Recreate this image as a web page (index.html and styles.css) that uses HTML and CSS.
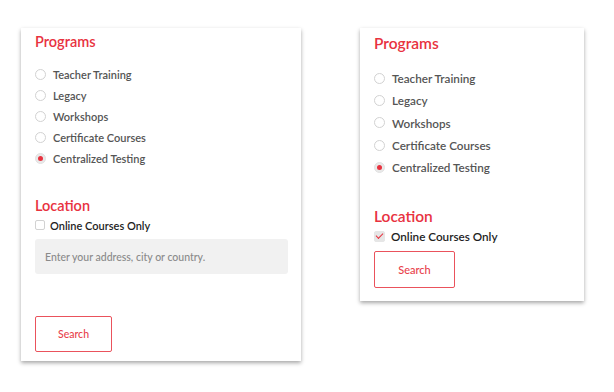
FILE: index.html
```html
<!DOCTYPE html>
<html lang="en">
<head>
    <meta charset="UTF-8">
    <meta name="viewport" content="width=device-width, initial-scale=1.0">
    <title>Program Filters</title>
    <link rel="stylesheet" href="styles.css">
</head>
<body>
    <div class="page">
        <!-- filter panel with address search -->
        <form class="filter-card wide">
            <h2>Programs</h2>
            <div class="radio-list">
                <label class="radio-row"><input type="radio" name="prog1"> Teacher Training</label>
                <label class="radio-row"><input type="radio" name="prog1"> Legacy</label>
                <label class="radio-row"><input type="radio" name="prog1"> Workshops</label>
                <label class="radio-row"><input type="radio" name="prog1"> Certificate Courses</label>
                <label class="radio-row"><input type="radio" name="prog1" checked> Centralized Testing</label>
            </div>
            <h2 class="location">Location</h2>
            <label class="check-row"><input type="checkbox"> Online Courses Only</label>
            <input class="address" type="text" placeholder="Enter your address, city or country.">
            <button type="button" class="search-btn">Search</button>
        </form>

        <!-- filter panel, online only -->
        <form class="filter-card narrow">
            <h2>Programs</h2>
            <div class="radio-list">
                <label class="radio-row"><input type="radio" name="prog2"> Teacher Training</label>
                <label class="radio-row"><input type="radio" name="prog2"> Legacy</label>
                <label class="radio-row"><input type="radio" name="prog2"> Workshops</label>
                <label class="radio-row"><input type="radio" name="prog2"> Certificate Courses</label>
                <label class="radio-row"><input type="radio" name="prog2" checked> Centralized Testing</label>
            </div>
            <h2 class="location">Location</h2>
            <label class="check-row"><input type="checkbox" checked> Online Courses Only</label>
            <button type="button" class="search-btn">Search</button>
        </form>
    </div>
</body>
</html>
```

FILE: styles.css
```css
body {
    margin: 0;
    background-color: #fff;
    font-family: 'Lato', 'Liberation Sans', sans-serif;
}

.page {
    display: flex;
    align-items: flex-start;
    gap: 59px;
    padding: 28px 0 24px 21px;
}

.filter-card {
    display: flex;
    flex-direction: column;
    align-items: flex-start;
    background-color: #fff;
    box-shadow: 0 2px 4px rgba(0, 0, 0, 0.35);
}

.filter-card h2 {
    margin: 0;
    font-weight: 600;
    color: #e8323f;
}

.radio-row,
.check-row {
    display: flex;
    align-items: center;
    font-weight: 600;
}

.radio-row {
    color: #555;
}

.check-row {
    color: #1e1e1e;
}

.radio-row input {
    appearance: none;
    margin: 0;
    border: 1px solid #d2d2d2;
    border-radius: 50%;
    background-color: #fff;
    display: grid;
    place-content: center;
}

.radio-row input:checked {
    background-color: #e9e9e9;
    border-color: #e2e2e2;
}

.radio-row input:checked::before {
    content: "";
    width: 5px;
    height: 5px;
    border-radius: 50%;
    background-color: #e8323f;
}

.check-row input {
    appearance: none;
    margin: 0;
    border: 1px solid #d2d2d2;
    border-radius: 2px;
    background-color: #fff;
    display: grid;
    place-content: center;
}

.check-row input:checked {
    background-color: #e6e6e6;
    border-color: #e6e6e6;
}

.check-row input:checked::before {
    content: "";
    width: 6px;
    height: 3px;
    margin-top: -2px;
    border-left: 1.2px solid #e8323f;
    border-bottom: 1.2px solid #e8323f;
    transform: rotate(-45deg);
}

.address {
    box-sizing: border-box;
    border: none;
    border-radius: 3px;
    background-color: #f1f1f1;
    font-family: inherit;
    font-weight: 500;
    color: #333;
    outline: none;
}

.address::placeholder {
    color: #8a8a8a;
}

.search-btn {
    box-sizing: border-box;
    background-color: #fff;
    border: 1.5px solid #ea525c;
    border-radius: 2px;
    color: #e8414b;
    font-family: inherit;
    font-weight: 500;
    cursor: pointer;
}

/* first card */
.wide {
    width: 280px;
    height: 333px;
    box-sizing: border-box;
    padding: 5px 14px 0;
}

.wide h2 {
    font-size: 14.5px;
    line-height: 18px;
}

.wide .radio-list {
    margin-top: 13px;
}

.wide .radio-row {
    height: 21px;
    gap: 7px;
    font-size: 11px;
}

.wide .radio-row input {
    width: 11px;
    height: 11px;
}

.wide .location {
    margin-top: 28px;
}

.wide .check-row {
    margin-top: 0;
    height: 20px;
    gap: 5px;
    font-size: 11px;
}

.wide .check-row input {
    width: 10px;
    height: 10px;
}

.wide .address {
    margin-top: 4px;
    width: 253px;
    height: 35px;
    padding: 0 10px;
    font-size: 10.5px;
}

.wide .search-btn {
    margin-top: 42px;
    width: 77px;
    height: 36px;
    font-size: 10.5px;
}

/* second card */
.narrow {
    width: 224px;
    height: 273px;
    box-sizing: border-box;
    padding: 6px 14px 0;
}

.narrow h2 {
    font-size: 15.5px;
    line-height: 19px;
}

.narrow .radio-list {
    margin-top: 14px;
}

.narrow .radio-row {
    height: 22.3px;
    gap: 7px;
    font-size: 11.7px;
}

.narrow .radio-row input {
    width: 11px;
    height: 11px;
}

.narrow .location {
    margin-top: 29px;
}

.narrow .check-row {
    margin-top: 0;
    height: 20px;
    gap: 6px;
    font-size: 11.7px;
}

.narrow .check-row input {
    width: 11px;
    height: 11px;
}

.narrow .search-btn {
    margin-top: 5px;
    width: 81px;
    height: 37px;
    font-size: 11px;
}
```
